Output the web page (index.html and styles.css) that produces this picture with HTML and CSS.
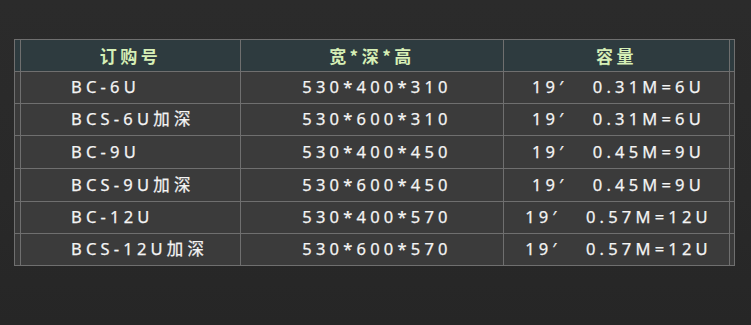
FILE: index.html
```html
<!DOCTYPE html>
<html lang="zh">
<head>
<meta charset="utf-8">
<link rel="stylesheet" href="styles.css">
</head>
<body>
<div class="page">
  <div class="grid">
    <div class="cell head side"></div>
    <div class="cell head">订购号</div>
    <div class="cell head">宽*深*高</div>
    <div class="cell head">容量</div>
    <div class="cell head side"></div>

    <div class="cell side"></div>
    <div class="cell model">BC-6U</div>
    <div class="cell dim">530*400*310</div>
    <div class="cell">19′&nbsp;&nbsp;&nbsp;0.31M=6U</div>
    <div class="cell side"></div>

    <div class="cell side"></div>
    <div class="cell model">BCS-6U加深</div>
    <div class="cell dim">530*600*310</div>
    <div class="cell">19′&nbsp;&nbsp;&nbsp;0.31M=6U</div>
    <div class="cell side"></div>

    <div class="cell side"></div>
    <div class="cell model">BC-9U</div>
    <div class="cell dim">530*400*450</div>
    <div class="cell">19′&nbsp;&nbsp;&nbsp;0.45M=9U</div>
    <div class="cell side"></div>

    <div class="cell side"></div>
    <div class="cell model">BCS-9U加深</div>
    <div class="cell dim">530*600*450</div>
    <div class="cell">19′&nbsp;&nbsp;&nbsp;0.45M=9U</div>
    <div class="cell side"></div>

    <div class="cell side"></div>
    <div class="cell model">BC-12U</div>
    <div class="cell dim">530*400*570</div>
    <div class="cell">19′&nbsp;&nbsp;&nbsp;0.57M=12U</div>
    <div class="cell side"></div>

    <div class="cell side"></div>
    <div class="cell model">BCS-12U加深</div>
    <div class="cell dim">530*600*570</div>
    <div class="cell">19′&nbsp;&nbsp;&nbsp;0.57M=12U</div>
    <div class="cell side"></div>
  </div>
</div>
</body>
</html>
```

FILE: styles.css
```css
html, body {
  margin: 0;
  padding: 0;
}
body {
  width: 751px;
  height: 325px;
  overflow: hidden;
  background: linear-gradient(180deg, #2b2b2b 0%, #292929 60%, #262626 100%);
  font-family: "Noto Sans", "Noto Sans CJK SC", sans-serif;
}
.page {
  padding: 39px 0 0 14px;
}
.grid {
  display: grid;
  width: 719px;
  grid-template-columns: 5px 219px 262px 225px 4px;
  grid-template-rows: 31px 31px 31px 32px 32px 31px 31px;
  gap: 1px;
  padding: 1px;
  background: #6f6f6f;
}
.cell {
  background: #3b3b3b;
  color: #f4f4f4;
  font-size: 16.5px;
  letter-spacing: 4.2px;
  display: flex;
  align-items: center;
  justify-content: center;
  white-space: pre;
  line-height: 1;
  padding-left: 4px;
  -webkit-text-stroke: 0.25px #f4f4f4;
}
.cell.side {
  padding: 0;
}
.cell.dim {
  padding-left: 10px;
}
.cell.model {
  justify-content: flex-start;
  padding-left: 50px;
}
.cell.head {
  background: #2e3b3f;
  color: #d6efb6;
  font-family: "Noto Sans CJK SC", sans-serif;
  font-size: 17px;
  font-weight: 700;
  letter-spacing: 3.5px;
  padding-left: 0;
  -webkit-text-stroke: 0;
}
```
